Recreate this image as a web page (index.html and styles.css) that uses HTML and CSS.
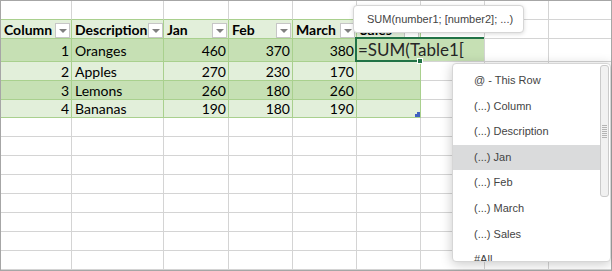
FILE: index.html
```html
<!DOCTYPE html>
<html lang="en">
<head>
    <meta charset="UTF-8">
    <title>Table1 - formula autocomplete</title>
    <link rel="stylesheet" href="styles.css">
</head>
<body>
<div class="screen">

    <!-- Worksheet grid -->
    <div class="sheet">
        <!-- row above the table -->
        <div class="cell top"></div><div class="cell top"></div><div class="cell top"></div><div class="cell top"></div><div class="cell top"></div><div class="cell top"></div><div class="cell"></div><div class="cell"></div><div class="cell"></div>

        <!-- table header -->
        <div class="cell t hdr"><span>Column</span><i class="filter"></i></div>
        <div class="cell t hdr"><span>Description</span><i class="filter"></i></div>
        <div class="cell t hdr"><span>Jan</span><i class="filter"></i></div>
        <div class="cell t hdr"><span>Feb</span><i class="filter"></i></div>
        <div class="cell t hdr"><span>March</span><i class="filter"></i></div>
        <div class="cell t hdr"><span>Sales</span><i class="filter"></i></div>
        <div class="cell"></div><div class="cell"></div><div class="cell"></div>

        <!-- data rows -->
        <div class="cell t odd num">1</div><div class="cell t odd">Oranges</div><div class="cell t odd num">460</div><div class="cell t odd num">370</div><div class="cell t odd num">380</div><div class="cell t odd"></div>
        <div class="cell"></div><div class="cell"></div><div class="cell"></div>

        <div class="cell t even num">2</div><div class="cell t even">Apples</div><div class="cell t even num">270</div><div class="cell t even num">230</div><div class="cell t even num">170</div><div class="cell t even"></div>
        <div class="cell"></div><div class="cell"></div><div class="cell"></div>

        <div class="cell t odd num">3</div><div class="cell t odd">Lemons</div><div class="cell t odd num">260</div><div class="cell t odd num">180</div><div class="cell t odd num">260</div><div class="cell t odd"></div>
        <div class="cell"></div><div class="cell"></div><div class="cell"></div>

        <div class="cell t even num">4</div><div class="cell t even">Bananas</div><div class="cell t even num">190</div><div class="cell t even num">180</div><div class="cell t even num">190</div><div class="cell t even"></div>
        <div class="cell"></div><div class="cell"></div><div class="cell"></div>

        <!-- empty rows -->
        <div class="cell"></div><div class="cell"></div><div class="cell"></div><div class="cell"></div><div class="cell"></div><div class="cell"></div><div class="cell"></div><div class="cell"></div><div class="cell"></div>
        <div class="cell"></div><div class="cell"></div><div class="cell"></div><div class="cell"></div><div class="cell"></div><div class="cell"></div><div class="cell"></div><div class="cell"></div><div class="cell"></div>
        <div class="cell"></div><div class="cell"></div><div class="cell"></div><div class="cell"></div><div class="cell"></div><div class="cell"></div><div class="cell"></div><div class="cell"></div><div class="cell"></div>
        <div class="cell"></div><div class="cell"></div><div class="cell"></div><div class="cell"></div><div class="cell"></div><div class="cell"></div><div class="cell"></div><div class="cell"></div><div class="cell"></div>
        <div class="cell"></div><div class="cell"></div><div class="cell"></div><div class="cell"></div><div class="cell"></div><div class="cell"></div><div class="cell"></div><div class="cell"></div><div class="cell"></div>
        <div class="cell"></div><div class="cell"></div><div class="cell"></div><div class="cell"></div><div class="cell"></div><div class="cell"></div><div class="cell"></div><div class="cell"></div><div class="cell"></div>
        <div class="cell"></div><div class="cell"></div><div class="cell"></div><div class="cell"></div><div class="cell"></div><div class="cell"></div><div class="cell"></div><div class="cell"></div><div class="cell"></div>
        <div class="cell"></div><div class="cell"></div><div class="cell"></div><div class="cell"></div><div class="cell"></div><div class="cell"></div><div class="cell"></div><div class="cell"></div><div class="cell"></div>
    </div>

    <!-- Table resize handle -->
    <svg class="resize" width="5" height="5" viewBox="0 0 5 5"><polygon points="0,5 5,5 5,0 2,0 2,2 0,2" fill="#4060c0"/></svg>

    <!-- In-cell editor -->
    <div class="editor">=SUM(Table1[</div>
    <div class="active-bottom"></div>
    <div class="fill-handle"></div>

    <!-- Function tooltip -->
    <div class="tooltip">SUM(number1; [number2]; ...)</div>

    <!-- Autocomplete list -->
    <div class="dropdown">
        <ul class="items">
            <li>@ - This Row</li>
            <li>(...) Column</li>
            <li>(...) Description</li>
            <li class="selected">(...) Jan</li>
            <li>(...) Feb</li>
            <li>(...) March</li>
            <li>(...) Sales</li>
            <li>#All</li>
        </ul>
        <div class="scroll">
            <div class="thumb"><div class="grip"></div></div>
        </div>
    </div>

</div>
</body>
</html>
```

FILE: styles.css
```css
body {
    margin: 0;
    padding: 0;
    background-color: #ffffff;
}

.screen {
    position: relative;
    width: 612px;
    height: 271px;
    overflow: hidden;
}

.sheet {
    display: grid;
    grid-template-columns: 71px 92px 65px 64px 64px 64px 64px 64px 62px;
    grid-template-rows: 19px 19px 23px 19px 19px 18px repeat(8, 19px);
    width: 612px;
    height: 271px;
    box-sizing: border-box;
    border: 1px solid #a6a6a6;
    font-family: Lato, "Liberation Sans", sans-serif;
    font-size: 14px;
    color: #000;
}

.cell {
    box-sizing: border-box;
    border-right: 1px solid #d4d4d4;
    border-bottom: 1px solid #d4d4d4;
    display: flex;
    align-items: center;
    padding: 0 2px 0 3px;
    white-space: nowrap;
    overflow: hidden;
}

.cell:nth-child(9n) {
    border-right: none;
}

.cell.top {
    border-bottom-color: #a9d08e;
}

.cell.t {
    border-color: #a9d08e;
}

.hdr {
    background-color: #e2efda;
    font-weight: bold;
    justify-content: space-between;
    padding-right: 1px;
}

.odd {
    background-color: #c6e0b4;
}

.even {
    background-color: #e2efda;
}

.num {
    justify-content: flex-end;
}

.filter {
    align-self: flex-end;
    flex: none;
    position: relative;
    width: 15px;
    height: 15px;
    box-sizing: border-box;
    border: 1px solid #c6c6c6;
    background-color: #fff;
    margin-bottom: 0;
}

.filter::after {
    content: "";
    position: absolute;
    left: 3px;
    top: 5px;
    border-left: 4px solid transparent;
    border-right: 4px solid transparent;
    border-top: 4px solid #808080;
}

.resize {
    position: absolute;
    left: 415px;
    top: 112px;
}

.editor {
    position: absolute;
    left: 355px;
    top: 37px;
    width: 129px;
    height: 24px;
    box-sizing: border-box;
    background-color: #c6e0b4;
    border-top: 2px solid #217346;
    border-left: 2px solid #217346;
    padding-left: 1px;
    font-family: Lato, "Liberation Sans", sans-serif;
    font-size: 17px;
    line-height: 22px;
    color: #262626;
    white-space: nowrap;
}

.active-bottom {
    position: absolute;
    left: 355px;
    top: 60px;
    width: 63px;
    height: 2px;
    background-color: #217346;
}

.fill-handle {
    position: absolute;
    left: 417px;
    top: 58px;
    width: 4px;
    height: 4px;
    background-color: #217346;
    border: 1px solid #fff;
}

.tooltip {
    position: absolute;
    left: 353px;
    top: 5px;
    width: 171px;
    height: 28px;
    box-sizing: border-box;
    padding-left: 13px;
    background-color: #fff;
    border: 1px solid #d6d6d6;
    border-radius: 4px;
    box-shadow: 0 1px 4px rgba(0, 0, 0, 0.15);
    font-family: "Liberation Sans", Arial, sans-serif;
    font-size: 11px;
    line-height: 26px;
    color: #444;
    white-space: nowrap;
}

.dropdown {
    position: absolute;
    left: 452px;
    top: 63px;
    width: 159px;
    height: 199px;
    box-sizing: border-box;
    display: flex;
    background-color: #fff;
    border: 1px solid #d6d6d6;
    border-radius: 4px;
    box-shadow: 0 2px 12px rgba(0, 0, 0, 0.22);
    overflow: hidden;
    font-family: "Liberation Sans", Arial, sans-serif;
    font-size: 11px;
    color: #444;
}

.items {
    list-style: none;
    margin: 0;
    padding: 4px 0 0 0;
    flex: 1;
}

.items li {
    height: 25.6px;
    line-height: 25.6px;
    padding-left: 21px;
    white-space: nowrap;
}

.items li.selected {
    background-color: #dadbdc;
}

.scroll {
    width: 9px;
    padding: 1px 1px 0 0;
}

.thumb {
    width: 9px;
    height: 132px;
    box-sizing: border-box;
    background-color: #f1f1f1;
    border: 1px solid #cacaca;
    border-radius: 3px;
    display: flex;
    align-items: center;
    justify-content: center;
}

.grip {
    width: 5px;
    height: 13px;
    background: repeating-linear-gradient(to bottom, #b4b4b4 0, #b4b4b4 1px, transparent 1px, transparent 2px);
}
```
